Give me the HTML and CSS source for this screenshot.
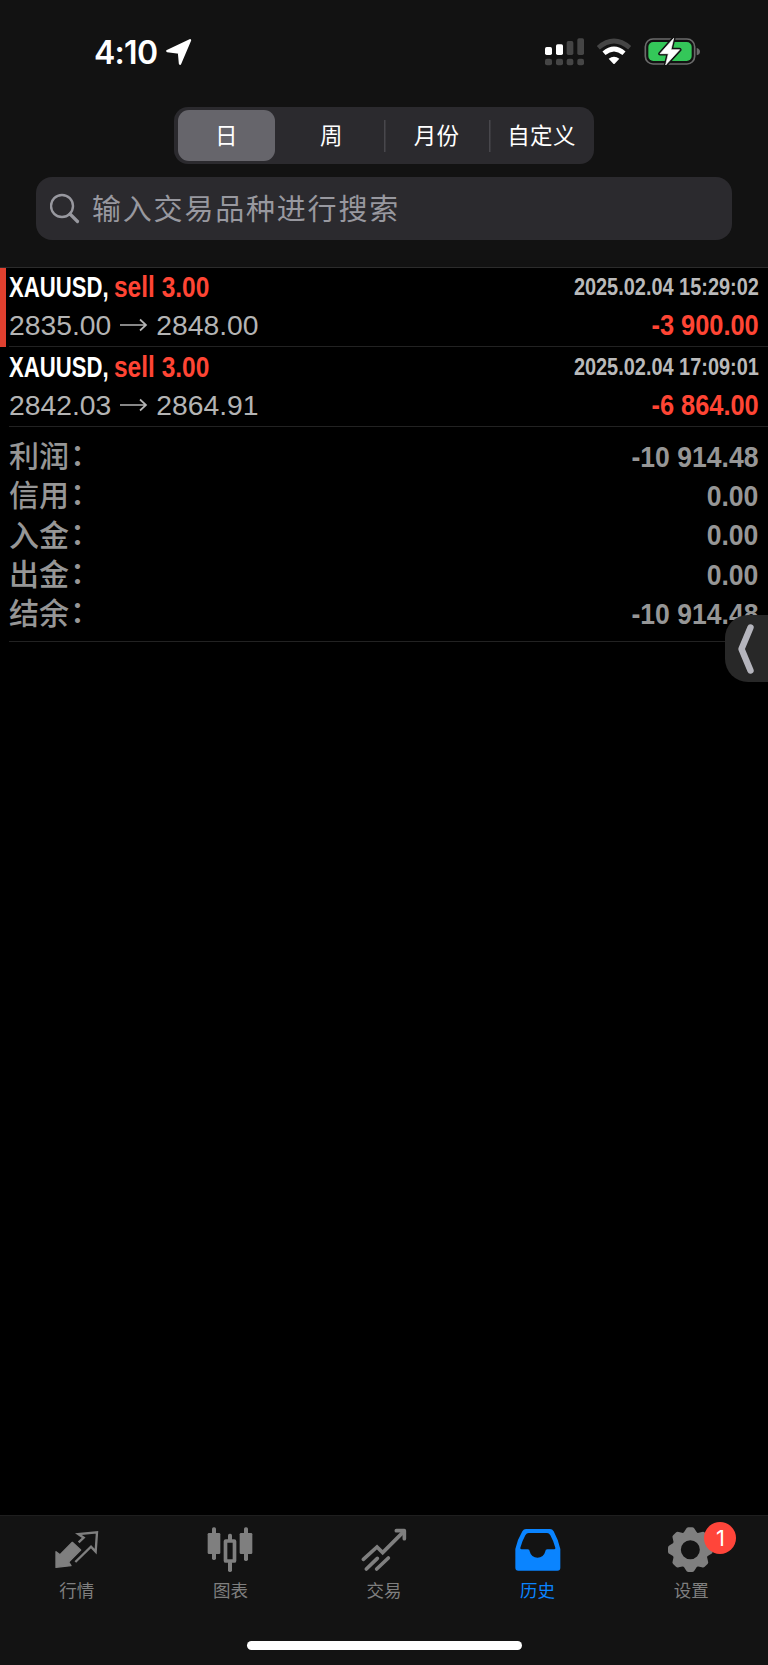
FILE: index.html
```html
<!DOCTYPE html>
<html lang="zh-CN">
<head>
    <meta charset="UTF-8">
    <meta name="viewport" content="width=device-width, initial-scale=1.0">
    <title>历史</title>
    <link rel="stylesheet" href="styles.css">
</head>
<body>
    <header class="header">
        <div class="status-bar">
            <span class="time">4:10</span>
            <svg class="location" width="26" height="26" viewBox="0 0 78 78"><path d="M72 4 42 74 39 41 4 36Z" fill="#fff" stroke="#fff" stroke-width="7" stroke-linejoin="round"/></svg>
            <svg class="signal" width="40" height="28" viewBox="0 0 120 84">
                <g fill="#fff"><rect x="0" y="27" width="21" height="24" rx="5"/><rect x="33" y="19" width="21" height="32" rx="5"/></g>
                <g fill="#454545"><rect x="65" y="9" width="20" height="42" rx="5"/><rect x="97" y="1" width="20" height="50" rx="5"/><rect x="0" y="62" width="21" height="20" rx="6"/><rect x="33" y="62" width="21" height="20" rx="6"/><rect x="65" y="62" width="20" height="20" rx="6"/><rect x="97" y="62" width="20" height="20" rx="6"/></g>
            </svg>
            <svg class="wifi" width="36" height="28" viewBox="0 0 108 84">
                <path d="M7 29Q54-11 101 29" fill="none" stroke="#454545" stroke-width="14"/>
                <path d="M24 46Q54 20 84 46" fill="none" stroke="#fff" stroke-width="14"/>
                <path d="M38 62Q54 50 70 62L56 77Q54 79 52 77Z" fill="#fff"/>
            </svg>
            <svg class="battery" width="57" height="30" viewBox="0 0 171 90">
                <rect x="4" y="6" width="148" height="75" rx="23" fill="none" stroke="#6b6b6b" stroke-width="5"/>
                <rect x="13" y="15" width="130" height="57" rx="15" fill="#34c759"/>
                <path d="M158 33Q168 36 168 44T158 55Z" fill="#6b6b6b"/>
                <path d="M89 4 48 50H73L65 84 107 38H81Z" fill="#fff" stroke="#121212" stroke-width="11" stroke-linejoin="round"/>
                <path d="M89 4 48 50H73L65 84 107 38H81Z" fill="#fff" stroke="#fff" stroke-width="2" stroke-linejoin="round"/>
            </svg>
        </div>
        <div class="segments">
            <div class="segment active"><span>日</span></div>
            <div class="segment">周</div>
            <div class="segment divided">月份</div>
            <div class="segment divided">自定义</div>
        </div>
        <div class="search">
            <svg width="30" height="32" viewBox="0 0 30 32"><circle cx="12" cy="13" r="11" fill="none" stroke="#98989f" stroke-width="2.4"/><path d="M20 21 27.5 28.5" stroke="#98989f" stroke-width="3.2" stroke-linecap="round"/></svg>
            <span>输入交易品种进行搜索</span>
        </div>
    </header>

    <main class="history">
        <div class="deal marked">
            <div class="line">
                <div class="title"><span class="symbol">XAUUSD,</span><span class="side">sell 3.00</span></div>
                <span class="date">2025.02.04 15:29:02</span>
            </div>
            <div class="line">
                <span class="prices">2835.00 <svg width="29" height="14" viewBox="0 0 29 14"><path d="M1 7H27M21 1.5 27 7 21 12.5" fill="none" stroke="#b4b4b4" stroke-width="1.7"/></svg> 2848.00</span>
                <span class="profit">-3 900.00</span>
            </div>
        </div>
        <div class="deal">
            <div class="line">
                <div class="title"><span class="symbol">XAUUSD,</span><span class="side">sell 3.00</span></div>
                <span class="date">2025.02.04 17:09:01</span>
            </div>
            <div class="line">
                <span class="prices">2842.03 <svg width="29" height="14" viewBox="0 0 29 14"><path d="M1 7H27M21 1.5 27 7 21 12.5" fill="none" stroke="#b4b4b4" stroke-width="1.7"/></svg> 2864.91</span>
                <span class="profit">-6 864.00</span>
            </div>
        </div>
        <div class="summary">
            <div class="total"><span class="label">利润<i>：</i></span><span class="amount">-10 914.48</span></div>
            <div class="total"><span class="label">信用<i>：</i></span><span class="amount">0.00</span></div>
            <div class="total"><span class="label">入金<i>：</i></span><span class="amount">0.00</span></div>
            <div class="total"><span class="label">出金<i>：</i></span><span class="amount">0.00</span></div>
            <div class="total"><span class="label">结余<i>：</i></span><span class="amount">-10 914.48</span></div>
        </div>
    </main>

    <div class="side-handle">
        <svg width="18" height="54" viewBox="0 0 18 54"><path d="M13.5 5.5 4.5 27 13.5 48.5" fill="none" stroke="#b5b5bd" stroke-width="6.4" stroke-linecap="round" stroke-linejoin="round"/></svg>
    </div>

    <footer class="footer">
        <nav class="tabs">
            <div class="tab">
                <svg width="50" height="50" viewBox="0 0 150 150">
                    <path d="M80 52 95 38 79 27 135 22 131 80 117 65 70 111" fill="none" stroke="#7f7f7f" stroke-width="7"/>
                    <path d="M12 127V80L24 89 61 52 86 75 50 111 57 122Z" fill="#7f7f7f" stroke="#7f7f7f" stroke-width="4" stroke-linejoin="round"/>
                </svg>
                <span>行情</span>
            </div>
            <div class="tab">
                <svg width="50" height="50" viewBox="0 0 150 150">
                    <g fill="#7f7f7f"><rect x="8" y="24" width="38" height="63" rx="4"/><rect x="21" y="7" width="12" height="98" rx="5"/><rect x="104" y="24" width="38" height="63" rx="4"/><rect x="117" y="7" width="12" height="101" rx="5"/><rect x="69" y="26" width="12" height="24" rx="5"/><rect x="69" y="108" width="12" height="33" rx="5"/></g>
                    <rect x="61.5" y="48" width="27" height="60" rx="1" fill="none" stroke="#7f7f7f" stroke-width="11"/>
                </svg>
                <span>图表</span>
            </div>
            <div class="tab">
                <svg width="50" height="50" viewBox="0 0 150 150">
                    <g fill="none" stroke="#7f7f7f" stroke-width="11" stroke-linecap="round"><path d="M13 103 54 66 71 83 134 20"/><path d="M22 132 55 100M53 132 88 99"/><path d="M112 17H136V41" stroke-linejoin="round"/></g>
                </svg>
                <span>交易</span>
            </div>
            <div class="tab active">
                <svg width="50" height="50" viewBox="0 0 150 150">
                    <path fill="#0a84ff" fill-rule="evenodd" d="M7 72Q14 42 28 19 32 12 39 12H111Q118 12 122 19 135 42 142 72V128Q142 137 133 137H16Q7 137 7 128ZM26 73Q21 73 22 68 28 47 37 31 41 24 47 24H102Q108 24 112 31 121 47 127 68 128 73 123 73H103Q97 73 97 79A24 24 0 0 1 50 79Q50 73 44 73Z"/>
                </svg>
                <span>历史</span>
            </div>
            <div class="tab">
                <svg width="50" height="50" viewBox="0 0 150 150">
                    <defs><path id="tooth" d="M50 28 60 12Q62 7 67 7H79Q84 7 86 12L96 28Z"/></defs>
                    <circle cx="73" cy="74" r="41.5" fill="none" stroke="#7f7f7f" stroke-width="26"/>
                    <g fill="#7f7f7f"><use href="#tooth"/><use href="#tooth" transform="rotate(45 73 74)"/><use href="#tooth" transform="rotate(90 73 74)"/><use href="#tooth" transform="rotate(135 73 74)"/><use href="#tooth" transform="rotate(180 73 74)"/><use href="#tooth" transform="rotate(225 73 74)"/><use href="#tooth" transform="rotate(270 73 74)"/><use href="#tooth" transform="rotate(315 73 74)"/></g>
                </svg>
                <span>设置</span>
                <b class="badge">1</b>
            </div>
        </nav>
        <div class="home-indicator"></div>
    </footer>
</body>
</html>
```
FILE: styles.css
```css
* {
    box-sizing: border-box;
}

body {
    margin: 0;
    height: 1665px;
    display: flex;
    flex-direction: column;
    position: relative;
    overflow: hidden;
    background: #000;
    color: #fff;
    font-family: "Liberation Sans", "Noto Sans CJK SC", sans-serif;
}

svg {
    display: block;
    flex: none;
}

.header {
    height: 268px;
    background: #121212;
    border-bottom: 1px solid #2c2c2c;
}

.status-bar {
    height: 107px;
    padding: 0 67px 3px 94px;
    display: flex;
    align-items: center;
}

.time {
    width: 72px;
    font-family: Inter, sans-serif;
    font-size: 32px;
    font-weight: 600;
    letter-spacing: -0.7px;
    white-space: nowrap;
}

.signal {
    margin-left: auto;
}

.wifi {
    margin-left: 11px;
}

.battery {
    margin-left: 12px;
}

.segments {
    width: 420px;
    height: 57px;
    margin: 0 auto;
    display: grid;
    grid-template-columns: repeat(4, 1fr);
    background: #2b2a2e;
    border-radius: 14px;
}

.segment {
    padding-bottom: 4px;
    display: flex;
    align-items: center;
    justify-content: center;
    font-size: 22.5px;
    letter-spacing: 0.3px;
}

.segment.active {
    padding: 3px 4px;
}

.segment.active span {
    width: 100%;
    height: 100%;
    padding-bottom: 4px;
    display: flex;
    align-items: center;
    justify-content: center;
    background: #66656b;
    border-radius: 11px;
}

.segment.divided {
    background: linear-gradient(#48474c, #48474c) left center / 1.5px 32px no-repeat;
}

.search {
    height: 63px;
    margin: 13px 36px 0;
    padding-left: 14px;
    display: flex;
    align-items: center;
    background: #2b2a2e;
    border-radius: 16px;
    color: #98989f;
    font-size: 29px;
    letter-spacing: 1.8px;
}

.search span {
    margin-left: 12px;
    padding-bottom: 4px;
}

.history {
    flex: 1;
}

.deal {
    height: 80px;
    padding: 1px 9px 0 9px;
    background: linear-gradient(#222, #222) 9px bottom / 100% 1px no-repeat;
}

.deal.marked {
    height: 79px;
    padding: 0 9px 0 3px;
    border-left: 6px solid #e0402f;
    background-position: 3px bottom;
}

.line {
    height: 38px;
    display: flex;
    align-items: center;
    justify-content: space-between;
    white-space: nowrap;
}

/* condensed bold figures */
.symbol,
.side,
.date,
.profit,
.amount {
    display: block;
    font-weight: bold;
    transform-origin: right center;
}

.title {
    display: flex;
    font-size: 29.5px;
}

.symbol {
    width: 105px;
    transform: scaleX(0.75);
    transform-origin: left center;
}

.side {
    transform: scaleX(0.83);
    transform-origin: left center;
}

.side,
.profit {
    color: #ff4534;
}

.date {
    color: #b9b9b9;
    font-size: 24px;
    transform: scaleX(0.83);
}

.prices {
    display: flex;
    align-items: center;
    gap: 8px;
    color: #b4b4b4;
    font-size: 28.3px;
}

.profit {
    font-size: 29.5px;
    transform: scaleX(0.86);
}

.summary {
    height: 215px;
    margin-left: 9px;
    padding: 10px 10px 0 0;
    border-bottom: 1px solid #222;
}

.total {
    height: 39.3px;
    display: flex;
    align-items: center;
    justify-content: space-between;
    color: #969696;
    font-size: 30px;
}

.label {
    padding-bottom: 5px;
    font-weight: 500;
}

.label i {
    font-style: normal;
    position: relative;
    left: 1px;
    top: -2px;
}

.amount {
    transform: scaleX(0.885);
}

.side-handle {
    position: absolute;
    top: 615px;
    right: 0;
    width: 43px;
    height: 67px;
    padding-left: 12px;
    display: flex;
    align-items: center;
    background: #282828;
    border-radius: 23px 0 0 23px;
}

.footer {
    height: 150px;
    background: #131313;
    border-top: 1px solid #1e1e1e;
}

.tabs {
    height: 125px;
    padding-top: 9px;
    display: grid;
    grid-template-columns: repeat(5, 1fr);
}

.tab {
    position: relative;
    display: flex;
    flex-direction: column;
    align-items: center;
    color: #7f7f7f;
    font-size: 17.5px;
    line-height: 24px;
}

.tab span {
    margin-top: 4px;
}

.tab.active {
    color: #0a84ff;
}

.badge {
    position: absolute;
    top: -3px;
    left: 90px;
    width: 32px;
    height: 32px;
    border-radius: 50%;
    background: #ff453a;
    color: #fff;
    font: 22px/32px Inter, sans-serif;
    text-align: center;
}

.home-indicator {
    width: 275px;
    height: 9px;
    margin: 0 auto;
    border-radius: 5px;
    background: #fff;
}
```
